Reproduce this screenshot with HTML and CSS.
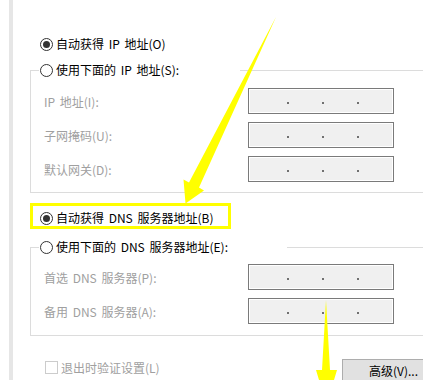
FILE: index.html
```html
<!DOCTYPE html>
<html lang="zh-CN">
<head>
<meta charset="utf-8">
<title>IPv4 属性</title>
<link rel="stylesheet" href="styles.css">
</head>
<body>
<div class="page">
  <div class="strip"></div>
  <main class="panel">
    <label class="opt first"><span class="radio on"></span>自动获得 IP 地址(O)</label>
    <fieldset class="group g1">
      <legend><span class="radio"></span>使用下面的 IP 地址(S):</legend>
      <div class="rows">
        <div class="row"><span class="lbl">IP 地址(I):</span><span class="ip"><i></i><i></i><i></i></span></div>
        <div class="row"><span class="lbl">子网掩码(U):</span><span class="ip"><i></i><i></i><i></i></span></div>
        <div class="row"><span class="lbl">默认网关(D):</span><span class="ip"><i></i><i></i><i></i></span></div>
      </div>
    </fieldset>
    <label class="opt dns"><span class="radio on"></span>自动获得 DNS 服务器地址(B)</label>
    <fieldset class="group g2">
      <legend><span class="radio"></span>使用下面的 DNS 服务器地址(E):</legend>
      <div class="rows">
        <div class="row"><span class="lbl">首选 DNS 服务器(P):</span><span class="ip"><i></i><i></i><i></i></span></div>
        <div class="row"><span class="lbl">备用 DNS 服务器(A):</span><span class="ip"><i></i><i></i><i></i></span></div>
      </div>
    </fieldset>
    <div class="footer">
      <label class="check"><span class="box"></span>退出时验证设置(L)</label>
      <button class="adv">高级(V)...</button>
    </div>
  </main>
</div>
<div class="mark"></div>
<svg class="arrows" viewBox="0 0 423 380" width="423" height="380">
  <polygon points="276,17 199,187.5 204,190.5 185.5,203.5 183.5,179.5 189,182.5"/>
  <polygon points="326,300 330,370 337,370 326.5,405 316,370 322,370"/>
</svg>
</body>
</html>
```

FILE: styles.css
```css
html, body {
  margin: 0;
  padding: 0;
  background: #ffffff;
}

body {
  width: 423px;
  height: 380px;
  overflow: hidden;
  position: relative;
  font-family: "Noto Sans CJK SC", "Microsoft YaHei", sans-serif;
  font-size: 12px;
  word-spacing: 2px;
  color: #000000;
}

.page {
  display: flex;
  height: 380px;
}

.strip {
  margin-left: 9px;
  width: 4px;
  background: #e6e6e6;
}

.panel {
  flex: 1;
  display: flex;
  flex-direction: column;
  padding-top: 34px;
}

.opt {
  display: flex;
  align-items: center;
  height: 20px;
  line-height: 20px;
  padding-left: 27px;
  white-space: nowrap;
}

.radio {
  width: 13px;
  height: 13px;
  box-sizing: border-box;
  border: 1px solid #333333;
  border-radius: 50%;
  background: #ffffff;
  margin-right: 3px;
  flex: none;
  position: relative;
}

.radio.on::after {
  content: "";
  position: absolute;
  left: 2px;
  top: 2px;
  width: 7px;
  height: 7px;
  border-radius: 50%;
  background: #333333;
}

.group {
  margin: 6px 0 0 17px;
  padding: 8px 0 10px 0;
  border: 1px solid #dcdcdc;
  border-right: none;
  min-width: 0;
}

.group legend {
  display: flex;
  align-items: center;
  height: 20px;
  line-height: 20px;
  margin-left: 8px;
  padding: 0 0 0 1px;
  white-space: nowrap;
  box-sizing: border-box;
}

.g1 legend { width: 201px; }
.g2 legend { width: 248px; }

.g2 {
  margin-top: 9px;
  padding-top: 7px;
  padding-bottom: 11px;
}

.dns {
  margin-top: 15px;
}

.rows {
  display: flex;
  flex-direction: column;
  gap: 8px;
  margin-left: 13px;
}

.row {
  display: flex;
  align-items: center;
  height: 26px;
}

.lbl {
  width: 204px;
  color: #a0a0a0;
  white-space: nowrap;
}

.ip {
  width: 146px;
  height: 26px;
  box-sizing: border-box;
  border: 1px solid #7a7a7a;
  box-shadow: inset 0 0 0 1px #ffffff;
  background: #f0f0f0;
  display: flex;
  align-items: flex-start;
  padding: 13px 0 0 38px;
  gap: 33px;
}

.ip i {
  width: 2px;
  height: 2px;
  background: #707070;
}

.footer {
  display: flex;
  align-items: flex-start;
  margin-top: 23px;
}

.check {
  display: flex;
  align-items: center;
  margin: 2px 0 0 32px;
  height: 13px;
  line-height: 13px;
  color: #a0a0a0;
  white-space: nowrap;
}

.box {
  width: 13px;
  height: 13px;
  box-sizing: border-box;
  border: 1px solid #cccccc;
  background: #ffffff;
  margin-right: 3px;
}

.adv {
  margin-left: auto;
  width: 81px;
  height: 24px;
  box-sizing: border-box;
  border: 1px solid #adadad;
  border-right: none;
  background: #e1e1e1;
  padding: 0 0 0 26px;
  text-align: left;
  font: inherit;
  line-height: 22px;
  color: #000000;
  white-space: nowrap;
  overflow: hidden;
}

.mark {
  position: absolute;
  left: 30px;
  top: 203px;
  width: 201px;
  height: 26px;
  box-sizing: border-box;
  border: 3px solid #ffff00;
}

.arrows {
  position: absolute;
  left: 0;
  top: 0;
  pointer-events: none;
}

.arrows polygon {
  fill: #ffff00;
}
```
